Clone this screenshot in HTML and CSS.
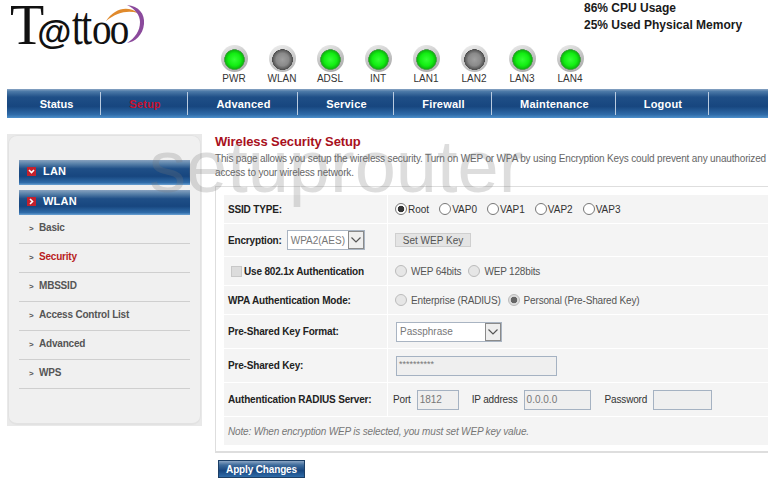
FILE: index.html
```html
<!DOCTYPE html>
<html lang="en">
<head>
<meta charset="utf-8">
<title>Wireless Security Setup</title>
<link rel="stylesheet" href="styles.css">
</head>
<body>
<header class="header">
  <div class="top-row">
    <div class="logo">
      <span class="logo-t">T</span><span class="logo-at">@</span><span class="logo-tt">tt</span><span class="logo-oo">oo</span>
      <svg class="swoosh" width="44" height="42" viewBox="0 0 44 42">
        <path d="M3 17C11 5 24 1 35 9C25 6 14 8 3 17Z" fill="#e08a2c"/>
        <path d="M24 1C36 2 42 10 41 20C40 31 32 38 24 39C32 34 37 27 37 18C37 11 32 5 24 1Z" fill="#8b4a9c"/>
      </svg>
    </div>
    <div class="usage">
      <div>86% CPU Usage</div>
      <div>25% Used Physical Memory</div>
    </div>
  </div>
  <div class="leds">
    <div class="led-item"><span class="led on"></span><span>PWR</span></div>
    <div class="led-item"><span class="led off"></span><span>WLAN</span></div>
    <div class="led-item"><span class="led on"></span><span>ADSL</span></div>
    <div class="led-item"><span class="led on"></span><span>INT</span></div>
    <div class="led-item"><span class="led on"></span><span>LAN1</span></div>
    <div class="led-item"><span class="led off"></span><span>LAN2</span></div>
    <div class="led-item"><span class="led on"></span><span>LAN3</span></div>
    <div class="led-item"><span class="led on"></span><span>LAN4</span></div>
  </div>
</header>

<nav class="nav">
  <a class="nav-a w1">Status</a>
  <a class="nav-a w2 active">Setup</a>
  <a class="nav-a w3">Advanced</a>
  <a class="nav-a w4">Service</a>
  <a class="nav-a w5">Firewall</a>
  <a class="nav-a w6">Maintenance</a>
  <a class="nav-a w7">Logout</a>
</nav>

<div class="content">
  <aside class="sidebar">
    <div class="side-inner">
      <div class="side-head"><span class="chev"><svg width="9" height="9" viewBox="0 0 9 9"><path d="M2 3l2.5 2.5L7 3" fill="none" stroke="#fff" stroke-width="1.6"/></svg></span>LAN</div>
      <div class="side-head"><span class="chev"><svg width="9" height="9" viewBox="0 0 9 9"><path d="M3 2l2.5 2.5L3 7" fill="none" stroke="#fff" stroke-width="1.6"/></svg></span>WLAN</div>
      <ul class="side-list">
        <li class="side-item">Basic</li>
        <li class="side-item current">Security</li>
        <li class="side-item">MBSSID</li>
        <li class="side-item">Access Control List</li>
        <li class="side-item">Advanced</li>
        <li class="side-item">WPS</li>
      </ul>
    </div>
  </aside>

  <main class="main">
    <h1 class="title">Wireless Security Setup</h1>
    <p class="desc">This page allows you setup the wireless security. Turn on WEP or WPA by using Encryption Keys could prevent any unauthorized access to your wireless network.</p>
    <section class="box">
      <div class="form-grid">
        <div class="cell label h28">SSID TYPE:</div>
        <div class="cell value radios">
          <label class="opt"><input type="radio" name="ssid" checked>Root</label>
          <label class="opt"><input type="radio" name="ssid">VAP0</label>
          <label class="opt"><input type="radio" name="ssid">VAP1</label>
          <label class="opt"><input type="radio" name="ssid">VAP2</label>
          <label class="opt"><input type="radio" name="ssid">VAP3</label>
        </div>

        <div class="cell label h32">Encryption:
          <span class="select enc">WPA2(AES)<span class="arrow"><svg width="12" height="8" viewBox="0 0 12 8"><path d="M1.5 1.5L6 6l4.5-4.5" fill="none" stroke="#555" stroke-width="1.2"/></svg></span></span>
        </div>
        <div class="cell value pad7"><span class="btn-wep">Set WEP Key</span></div>

        <div class="cell label h28 check-cell"><input class="check" type="checkbox" disabled>Use 802.1x Authentication</div>
        <div class="cell value radios-wide">
          <label class="opt wide"><input type="radio" name="wep" disabled>WEP 64bits</label>
          <label class="opt wide"><input type="radio" name="wep" disabled>WEP 128bits</label>
        </div>

        <div class="cell label h28">WPA Authentication Mode:</div>
        <div class="cell value radios-wide">
          <label class="opt wide"><input type="radio" name="mode" disabled>Enterprise (RADIUS)</label>
          <label class="opt wide"><input type="radio" name="mode" disabled checked>Personal (Pre-Shared Key)</label>
        </div>

        <div class="cell label h33">Pre-Shared Key Format:</div>
        <div class="cell value pad8"><span class="select fmt">Passphrase<span class="arrow"><svg width="12" height="8" viewBox="0 0 12 8"><path d="M1.5 1.5L6 6l4.5-4.5" fill="none" stroke="#555" stroke-width="1.2"/></svg></span></span></div>

        <div class="cell label h33">Pre-Shared Key:</div>
        <div class="cell value pad8"><span class="field psk">**********</span></div>

        <div class="cell label h33">Authentication RADIUS Server:</div>
        <div class="cell value radius">
          <span>Port</span><span class="field port">1812</span>
          <span class="ip-label">IP address</span><span class="field ip">0.0.0.0</span>
          <span class="pw-label">Password</span><span class="field pw"></span>
        </div>

        <div class="cell note">Note: When encryption WEP is selected, you must set WEP key value.</div>
      </div>
    </section>
    <button class="apply" type="button">Apply Changes</button>
  </main>
</div>

<div class="watermark">setuprouter</div>
</body>
</html>
```

FILE: styles.css
```css
* { box-sizing: border-box; }
html, body { margin: 0; padding: 0; }
body {
  width: 768px;
  height: 483px;
  overflow: hidden;
  position: relative;
  background: #fff;
  font-family: "Liberation Sans", Arial, sans-serif;
  color: #222;
}

/* header */
.header { height: 89px; }
.top-row {
  height: 45px;
  display: flex;
  justify-content: space-between;
}
.logo {
  position: relative;
  width: 150px;
  height: 50px;
  padding: 0 0 0 10px;
  display: flex;
  align-items: baseline;
  color: #111;
  white-space: nowrap;
  font-family: "Liberation Serif", serif;
  line-height: 50px;
}
.logo-t { font-size: 56px; margin-right: -7px; }
.logo-at { font-family: "Liberation Sans", sans-serif; font-weight: bold; font-size: 35px; margin-right: 1px; }
.logo-tt { font-size: 54px; letter-spacing: -2px; transform: scaleX(.72); transform-origin: left; margin-right: -6px; }
.logo-oo { font-size: 46px; letter-spacing: -2px; transform: scaleX(.85); transform-origin: left; }
.swoosh { position: absolute; left: 103px; top: 4px; }
.usage {
  width: 184px;
  font-weight: bold;
  font-size: 12px;
  line-height: 17px;
  color: #1a1a1a;
}
.leds {
  display: flex;
  padding-left: 210px;
}
.led-item {
  width: 48px;
  display: flex;
  flex-direction: column;
  align-items: center;
  font-size: 10px;
  line-height: 12px;
  color: #333;
}
.led {
  width: 27px;
  height: 27px;
  border-radius: 50%;
  margin-bottom: 1px;
  display: block;
}
.led.on {
  background:
    radial-gradient(circle 10.5px at 50% 54%, #35ff35 0, #12ee12 60%, #0fb80f 88%, #5f9a5f 97%, rgba(150,170,150,0) 100%),
    linear-gradient(160deg, #eeeeee, #bcbcbc 60%, #a8a8a8);
}
.led.off {
  background:
    radial-gradient(circle 10.5px at 50% 54%, #a0a0a0 0, #8a8a8a 60%, #5e5e5e 88%, #4c4c4c 97%, rgba(120,120,120,0) 100%),
    linear-gradient(160deg, #f2f2f2, #c6c6c6 60%, #b4b4b4);
}

/* nav */
.nav {
  margin-left: 7px;
  height: 29px;
  display: flex;
  padding: 3px 0;
  background: linear-gradient(#8aa5c4 0, #4d7aa8 8%, #1f4f87 28%, #17467f 60%, #2f6ba8 88%, #4d90cc 100%);
}
.nav-a {
  display: flex;
  align-items: center;
  justify-content: center;
  padding-left: 2px;
  border-right: 1px solid #b9cbe0;
  color: #fff;
  font-size: 11px;
  font-weight: bold;
  letter-spacing: .2px;
}
.nav-a.active { color: #c8102e; }
.w1 { width: 94px; padding-left: 6px; letter-spacing: 0; }
.w2 { width: 87px; }
.w3 { width: 110px; }
.w4 { width: 96px; }
.w5 { width: 98px; }
.w6 { width: 124px; }
.w7 { width: 93px; }

/* content */
.content {
  display: flex;
  padding: 16px 0 0 7px;
}
.sidebar {
  width: 195px;
  height: 292px;
  margin-right: 13px;
  background: #e9e9e9;
  padding: 1px;
}
.side-inner {
  height: 100%;
  padding: 24px 10px 0;
  background: #f0f0f0;
  border: 1px solid #e2e2e2;
  border-bottom-width: 2px;
  border-radius: 9px;
}
.side-head {
  height: 25px;
  margin-bottom: 5px;
  display: flex;
  align-items: center;
  padding: 0 0 3px 8px;
  color: #fff;
  font-size: 11px;
  font-weight: bold;
  letter-spacing: .2px;
  background: linear-gradient(#88a2bf 0, #5c84ab 14%, #1f4f87 35%, #17467f 65%, #2f6ba8 90%, #6aa2d4 100%);
}
.chev {
  width: 9px;
  height: 9px;
  margin-right: 7px;
  background: #c4202c;
  display: flex;
}
.side-list {
  list-style: none;
  margin: -5px 0 0;
  padding: 0;
}
.side-item {
  height: 29px;
  padding: 6px 0 0 20px;
  font-size: 10px;
  letter-spacing: -.2px;
  line-height: 14px;
  font-weight: bold;
  color: #555;
  border-bottom: 1px solid #cfcfcf;
  position: relative;
}
.side-item::before {
  content: ">";
  position: absolute;
  left: 10px;
  top: 7px;
  font-size: 8px;
  color: #555;
}
.side-item.current { color: #b81c22; }

/* main */
.main { flex: 1; min-width: 0; }
.title {
  margin: 0;
  font-size: 13px;
  line-height: 16px;
  color: #a8101c;
  letter-spacing: -.1px;
}
.desc {
  margin: 2px 0 0;
  width: 560px;
  font-size: 10px;
  letter-spacing: -.16px;
  line-height: 14px;
  color: #666;
}
.box {
  margin-top: 6px;
  height: 267px;
  padding: 8px 0 0 8px;
  border: 1px solid #dedede;
  border-width: 1px 0 2px 1px;
}
.form-grid {
  display: grid;
  grid-template-columns: 163px 1fr;
  gap: 1px 1px;
}
.cell {
  background: #f4f4f4;
  display: flex;
  align-items: center;
  font-size: 10px;
  letter-spacing: -.17px;
  white-space: nowrap;
}
.label {
  padding-left: 4px;
  font-weight: bold;
  color: #222;
}
.h28 { height: 28px; }
.h32 { height: 32px; }
.h33 { height: 33px; }
.value { color: #333; }
.pad7 { padding-left: 7px; }
.pad8 { padding-left: 8px; }
.radios { padding-left: 7px; gap: 10px; letter-spacing: 0; }
.radios-wide { padding-left: 7px; gap: 7px; color: #555; }
.opt { display: flex; align-items: center; }
.opt input {
  appearance: none;
  width: 12px;
  height: 12px;
  margin: 0 1px 0 0;
  border: 1px solid #777;
  border-radius: 50%;
  background: #fff;
}
.opt.wide input { margin-right: 4px; }
.opt input:checked { background: radial-gradient(circle, #333 0, #333 3px, #fff 3.6px); }
.opt input:disabled { border-color: #bbb; background: #e6e6e6; }
.opt input:disabled:checked { background: radial-gradient(circle, #666 0, #666 3px, #ddd 3.6px); }
.check-cell { padding-left: 7px; }
.check {
  appearance: none;
  width: 11px;
  height: 11px;
  margin: 0 2px 0 0;
  background: #dcdcdc;
  border: 1px solid #c8c8c8;
}
.select {
  display: inline-flex;
  align-items: center;
  justify-content: space-between;
  height: 20px;
  padding-left: 3px;
  background: #fff;
  border: 1px solid #a9b4c2;
  color: #777;
  font-weight: normal;
  font-size: 10px;
  letter-spacing: 0;
}
.enc { width: 78px; margin-left: 5px; }
.fmt { width: 106px; }
.arrow {
  width: 16px;
  height: 100%;
  display: flex;
  align-items: center;
  justify-content: center;
  background: #eee;
  border: 1px solid #8a8a8a;
}
.btn-wep {
  width: 76px;
  height: 14px;
  display: flex;
  align-items: center;
  justify-content: center;
  background: #e4e4e4;
  border: 1px solid #cfcfcf;
  color: #555;
  font-size: 10px;
  letter-spacing: 0;
}
.field {
  display: inline-block;
  height: 20px;
  padding-left: 2px;
  background: #efefef;
  border: 1px solid #a5b2c2;
  color: #777;
  font-size: 10px;
  letter-spacing: 0;
  line-height: 18px;
}
.psk { width: 161px; font-size: 9px; line-height: 15px; }
.radius { padding-left: 5px; }
.port { width: 42px; margin-left: 6px; }
.ip-label { margin-left: 13px; }
.ip { width: 67px; margin-left: 6px; }
.pw-label { margin-left: 14px; }
.pw { width: 59px; margin-left: 6px; }
.note {
  grid-column: 1 / -1;
  height: 28px;
  padding-left: 4px;
  font-style: italic;
  color: #777;
}
.apply {
  display: block;
  margin: 7px 0 0 3px;
  width: 87px;
  height: 18px;
  padding: 0;
  border: 1px solid #1c3f66;
  color: #fff;
  font-family: "Liberation Sans", Arial, sans-serif;
  font-size: 10px;
  letter-spacing: -.15px;
  font-weight: bold;
  background: linear-gradient(#8aa5c4 0, #3f6c9c 25%, #17467f 60%, #2f6ba8 100%);
}

/* watermark over the page */
.watermark {
  position: absolute;
  left: 149px;
  top: 130px;
  font-size: 74px;
  line-height: 74px;
  font-family: "Liberation Sans", Arial, sans-serif;
  color: rgba(120, 120, 120, .25);
  white-space: nowrap;
  pointer-events: none;
}
```
